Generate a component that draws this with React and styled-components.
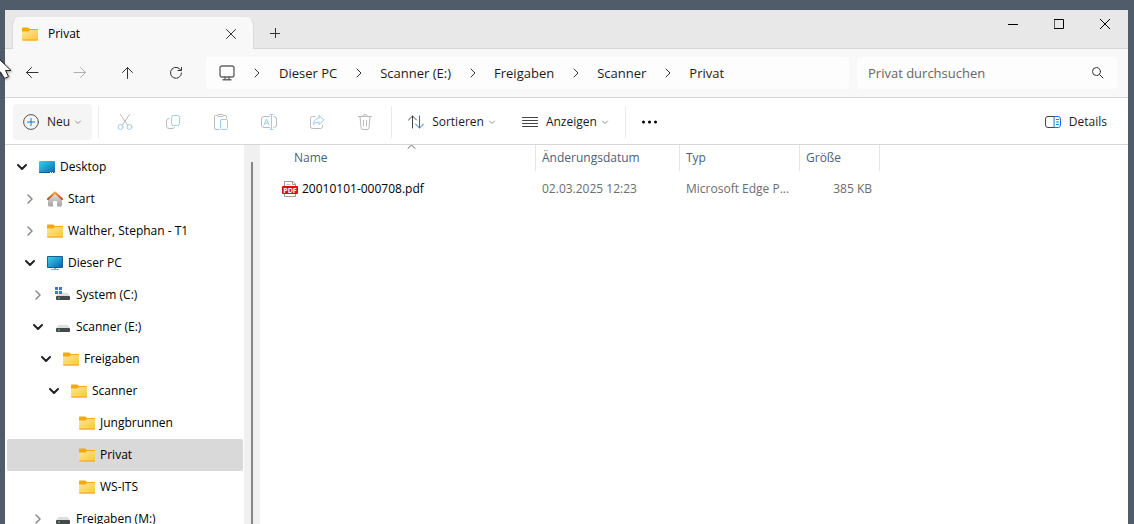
import { useState } from 'react'
import styled, { createGlobalStyle } from 'styled-components'

const GlobalStyle = createGlobalStyle`
	* {
		box-sizing: border-box;
	}

	body {
		margin: 0;
		background: #515c6b;
		color: #1b1b1b;
		font-family: 'Open Sans', 'Noto Sans', sans-serif;
		font-size: 12px;
		line-height: 16px;
	}

	button, input {
		font: inherit;
		color: inherit;
		border: none;
		background: none;
		padding: 0;
	}

	svg {
		display: block;
		flex: none;
	}
`

const Screen = styled.div`
	height: 100vh;
	padding: 10px 6px 0 5px;
	overflow: hidden;
	position: relative;
`

const Window = styled.div`
	height: 100%;
	display: flex;
	flex-direction: column;
	background: white;
`

const TitleBar = styled.header`
	height: 39px;
	flex: none;
	display: flex;
	align-items: flex-end;
	background: #e8e8e8;
	border-bottom: 1px solid #d6d6d6;
	padding-left: 7px;
`

const Tab = styled.div`
	width: 242px;
	height: 32px;
	margin-bottom: -1px;
	padding: 0 14px 0 9px;
	display: flex;
	align-items: center;
	gap: 10px;
	background: #f8f8f8;
	border: 1px solid #dcdcdc;
	border-top-color: #f8f8f8;
	border-bottom: none;
	border-radius: 8px 8px 0 0;
`

const TabTitle = styled.span`
	flex: 1;
	font-weight: 500;
	color: black;
`

const IconButton = styled.button`
	width: ${props => props.$width || 16}px;
	height: ${props => props.$height || 16}px;
	display: flex;
	flex: none;
	align-items: center;
	justify-content: center;
`

const WindowButtons = styled.div`
	display: flex;
	align-self: flex-start;
	margin-left: auto;
`

const NavBar = styled.nav`
	height: 49px;
	flex: none;
	display: flex;
	align-items: center;
	gap: 8px;
	padding: 0 11px 0 3px;
	background: #f8f8f8;
	border-bottom: 1px solid #d6d6d6;
`

const NavButtons = styled.div`
	display: flex;
	flex: none;
	width: 190px;
`

const AddressBar = styled.div`
	flex: 1;
	height: 32px;
	display: flex;
	align-items: center;
	padding-left: 13px;
	background: #fdfdfd;
	border-radius: 4px;
	font-size: 13px;
`

const PathPart = styled.span`
	display: flex;
	align-items: center;
`

const Separator = styled.span`
	width: ${props => props.$first ? 44 : 43}px;
	display: flex;
	justify-content: center;
`

const Crumb = styled.a`
	color: #1b1b1b;
	text-decoration: none;
	white-space: nowrap;
`

const SearchBox = styled.label`
	width: 260px;
	height: 32px;
	flex: none;
	display: flex;
	align-items: center;
	padding: 0 13px 0 11px;
	background: #fdfdfd;
	border-radius: 4px;
	font-size: 13px;
`

const SearchInput = styled.input`
	flex: 1;
	min-width: 0;
	outline: none;

	&::placeholder {
		color: #666666;
		opacity: 1;
	}
`

const Toolbar = styled.div`
	height: 47px;
	flex: none;
	display: flex;
	align-items: center;
	padding: 2px 11px 0 8px;
	border-bottom: 1px solid #d6d6d6;
`

const ToolButton = styled.button`
	height: 36px;
	flex: none;
	display: flex;
	align-items: center;
	gap: 8px;
	padding: 0 10px;
	border-radius: 4px;
	background: ${props => props.$filled ? '#f5f5f5' : 'none'};

	& + & {
		margin-left: 6px;
	}
`

const MenuLabel = styled.span`
	display: flex;
	align-items: center;
	gap: 4px;
`

const Divider = styled.span`
	width: 1px;
	height: 32px;
	margin: 0 ${props => props.$after || 6}px 0 ${props => props.$before || 6}px;
	background: #eaeaea;
`

const Spacer = styled.span`
	flex: 1;
`

const Body = styled.div`
	flex: 1;
	min-height: 0;
	display: flex;
`

const Tree = styled.ul`
	width: 239px;
	flex: none;
	margin: 0;
	padding: 6px 1px 0 2px;
	overflow: hidden;
	list-style: none;
`

const TreeRow = styled.li`
	height: 32px;
	display: flex;
	align-items: center;
	gap: 5px;
	padding-left: ${props => 3 + props.$depth * 8}px;
	border-radius: 2px;
	background: ${props => props.$selected ? '#d9d9d9' : 'none'};
	color: black;
	white-space: nowrap;
	cursor: default;
`

const ScrollTrack = styled.div`
	width: 16px;
	flex: none;
	display: flex;
	justify-content: center;
	padding-top: 17px;
	background: #f0f0f0;
`

const ScrollThumb = styled.div`
	width: 2px;
	background: #868686;
`

const FileArea = styled.main`
	flex: 1;
	min-width: 0;
	overflow: hidden;
`

const FileTable = styled.table`
	width: 620px;
	table-layout: fixed;
	border-collapse: separate;
	border-spacing: 0;
`

const HeadCell = styled.th`
	width: ${props => props.$width}px;
	height: 26px;
	position: relative;
	padding: 0 0 0 ${props => props.$first ? 34 : 6}px;
	border-right: 1px solid #e5e5e5;
	color: #4c607a;
	font-weight: 400;
	text-align: left;
`

const SortMark = styled.span`
	position: absolute;
	top: -1px;
	left: 147px;
`

const Cell = styled.td`
	height: 36px;
	padding: 0 8px 0 ${props => props.$first ? 22 : 6}px;
	color: #6d6d6d;
	text-align: ${props => props.$right ? 'right' : 'left'};
	white-space: nowrap;
`

const FileName = styled.span`
	display: flex;
	align-items: center;
	gap: 4px;
	color: black;
`

const Pointer = styled.div`
	position: absolute;
	top: 55px;
	left: -5px;
	filter: drop-shadow(1px 1px 1px #00000055);
`

const Stroke = ({ size = 16, color = '#333', width = 1, children }) => (
	<svg width={size} height={size} viewBox={`0 0 ${size} ${size}`} fill="none" stroke={color} strokeWidth={width} strokeLinecap="round" strokeLinejoin="round" aria-hidden="true">
		{children}
	</svg>
)

const gray = '#b9b9b9'
const paleBlue = '#9cccf0'
const blue = '#0f78d4'

const FolderIcon = () => (
	<svg width="16" height="16" viewBox="0 0 16 16" aria-hidden="true">
		<defs>
			<linearGradient id="folder" x1="0" y1="0" x2="1" y2="1">
				<stop offset="0" stopColor="#ffe69c" />
				<stop offset="1" stopColor="#ffc634" />
			</linearGradient>
		</defs>
		<path d="M0 2.500Q0 1.500 1 1.500H6L8 3H15Q16 3 16 4V8H0Z" fill="#f2a90c" />
		<path d="M0 5.500H6.500L8 4H15.500Q16 4 16 4.500V13.500Q16 14.500 15 14.500H1Q0 14.500 0 13.500Z" fill="url(#folder)" />
		<path d="M0 13.500Q0 14.500 1 14.500H15Q16 14.500 16 13.500Z" fill="#e9a51b" />
	</svg>
)

const ScreenIcon = ({ stand }) => (
	<svg width="16" height="16" viewBox="0 0 16 16" aria-hidden="true">
		<defs>
			<linearGradient id="screen" x1="0" y1="0" x2="1" y2="1">
				<stop offset="0" stopColor="#34d5e4" />
				<stop offset="1" stopColor="#0a64bb" />
			</linearGradient>
		</defs>
		{stand ? (
			<>
				<path d="M7 13H9V14H12V15H4V14H7Z" fill="#9aa5ad" />
				<rect y="1" width="16" height="12" rx="1" fill="#17618f" />
				<rect x="1" y="2" width="14" height="10" fill="url(#screen)" />
			</>
		) : (
			<>
				<rect y="2" width="16" height="12" rx="1" fill="url(#screen)" />
				<path d="M0 13H11V14H1Q0 14 0 13Z" fill="#0d5e91" />
				<path d="M11 13.500h1M13 13.500h1" stroke="white" />
			</>
		)}
	</svg>
)

const HomeIcon = () => (
	<svg width="16" height="16" viewBox="0 0 16 16" aria-hidden="true">
		<defs>
			<linearGradient id="house" x1="0" y1="0" x2="0" y2="1">
				<stop offset="0" stopColor="#e3e3e3" />
				<stop offset="1" stopColor="#a3a3a3" />
			</linearGradient>
			<linearGradient id="roof" x1="0" y1="0" x2="0" y2="1">
				<stop offset="0" stopColor="#f9a13a" />
				<stop offset="1" stopColor="#cf4515" />
			</linearGradient>
		</defs>
		<path d="M1 8L8 2L15 8V14Q15 15.500 13.500 15.500H10V10.500Q10 10 9.500 10H6.500Q6 10 6 10.500V15.500H2.500Q1 15.500 1 14Z" fill="url(#house)" />
		<path d="M1 8L8 1.500L15 8" fill="none" stroke="url(#roof)" strokeWidth="2" strokeLinecap="round" strokeLinejoin="round" />
	</svg>
)

const DriveIcon = ({ system, network }) => (
	<svg width="16" height="16" viewBox="0 0 16 16" aria-hidden="true">
		<path d="M3.500 6H12.500L15 9H1Z" fill="#dcdedf" />
		<rect x="1" y="9" width="14" height="4" rx="1" fill="#45484a" />
		<path d="M3 11h2" stroke="#5fe068" strokeWidth="1" />
		{system && <path d="M0 0H3V3H0ZM4 0H7V3H4ZM0 4H3V7H0ZM4 4H7V7H4Z" fill="#1588dc" />}
		{network && <path d="M2 13H14V15H2Z" fill="#59d869" />}
	</svg>
)

const PdfIcon = () => (
	<svg width="16" height="16" viewBox="0 0 16 16" aria-hidden="true">
		<path d="M2.500 .5H11L13.500 3V15.500H2.500Z" fill="white" stroke="#9a9a9a" />
		<path d="M10.500 .5V3.500H13.500" fill="none" stroke="#9a9a9a" />
		<path d="M4.500 3.500H8.500" stroke="#c5c5c5" />
		<rect y="5" width="16" height="8" rx="1" fill="#e30613" />
		<text x="8" y="12" fill="white" fontFamily="Open Sans, sans-serif" fontSize="7" fontWeight="700" textAnchor="middle">PDF</text>
	</svg>
)

const Chevron = ({ dir = 'down', color = '#333', width = 1 }) => (
	<Stroke size={12} color={color} width={width}>
		<path d={dir === 'down' ? 'M2 4L6 8L10 4' : 'M4 2L8 6L4 10'} />
	</Stroke>
)

const MenuChevron = () => (
	<Stroke size={8} color="#8f8f8f">
		<path d="M1.500 3L4 5.500L6.500 3" />
	</Stroke>
)

const treeIcons = {
	folder: <FolderIcon />,
	desktop: <ScreenIcon />,
	pc: <ScreenIcon stand />,
	home: <HomeIcon />,
	system: <DriveIcon system />,
	drive: <DriveIcon />,
	network: <DriveIcon network />
}

const tree = [
	{ name: 'Desktop', depth: 0, icon: 'desktop', state: 'open' },
	{ name: 'Start', depth: 1, icon: 'home', state: 'closed' },
	{ name: 'Walther, Stephan - T1', depth: 1, icon: 'folder', state: 'closed' },
	{ name: 'Dieser PC', depth: 1, icon: 'pc', state: 'open' },
	{ name: 'System (C:)', depth: 2, icon: 'system', state: 'closed' },
	{ name: 'Scanner (E:)', depth: 2, icon: 'drive', state: 'open' },
	{ name: 'Freigaben', depth: 3, icon: 'folder', state: 'open' },
	{ name: 'Scanner', depth: 4, icon: 'folder', state: 'open' },
	{ name: 'Jungbrunnen', depth: 5, icon: 'folder' },
	{ name: 'Privat', depth: 5, icon: 'folder' },
	{ name: 'WS-ITS', depth: 5, icon: 'folder' },
	{ name: 'Freigaben (M:)', depth: 2, icon: 'network', state: 'closed' }
]

const path = ['Dieser PC', 'Scanner (E:)', 'Freigaben', 'Scanner', 'Privat']

const navButtons = [
	{ label: 'Zurück', d: 'M14 7.500H2.500M7.500 2.500L2.500 7.500L7.500 12.500' },
	{ label: 'Vorwärts', d: 'M2 7.500H13.500M8.500 2.500L13.500 7.500L8.500 12.500', color: '#b0b0b0' },
	{ label: 'Nach oben', d: 'M7.500 13.500V2.500M2.500 7.500L7.500 2.500L12.500 7.500' },
	{ label: 'Aktualisieren', d: 'M13 5.500A5.500 5.500 0 1 0 13.500 8M13.500 2.500V5.500H10' }
]

const tools = [
	{
		label: 'Ausschneiden',
		icon: (
			<>
				<path d="M3.500 .5L10.500 11M12.500 .5L5.500 11" />
				<g stroke={paleBlue}><circle cx="3.500" cy="13" r="2.500" /><circle cx="12.500" cy="13" r="2.500" /></g>
			</>
		)
	},
	{
		label: 'Kopieren',
		icon: (
			<>
				<path d="M4 4.500Q1.500 4.500 1.500 7V12Q1.500 14.500 4 14.500H7Q9.500 14.500 9.500 13.500" />
				<rect x="6.500" y="1.500" width="8" height="10" rx="2" stroke={paleBlue} />
			</>
		)
	},
	{
		label: 'Einfügen',
		icon: (
			<>
				<path d="M4.500 1.500H2.500Q1.500 1.500 1.500 2.500V14Q1.500 15.500 3 15.500H6M10.500 1.500H12.500Q13.500 1.500 13.500 2.500V4" />
				<rect x="4.500" y=".5" width="6" height="2" rx="1" />
				<rect x="7.500" y="5.500" width="7" height="10" rx="1" stroke={paleBlue} />
			</>
		)
	},
	{
		label: 'Umbenennen',
		icon: (
			<>
				<path d="M8.500 2.500H3Q.5 2.500 .5 5V11Q.5 13.500 3 13.500H8.500M13 2.500Q15.500 2.500 15.500 5V11Q15.500 13.500 13 13.500" />
				<path d="M3 11L5.500 5L8 11M4 9H7M9 .5H12M9 15.500H12M10.500 .5V15.500" stroke={paleBlue} />
			</>
		)
	},
	{
		label: 'Freigeben',
		icon: (
			<>
				<path d="M6 2.500H3.500Q1.500 2.500 1.500 4.500V12.500Q1.500 14.500 3.500 14.500H11.500Q13.500 14.500 13.500 12.500V11.500" />
				<path d="M10 1.500L15 6L10 10.500V8Q6.500 8 4.500 10.500Q5 4.500 10 4Z" stroke={paleBlue} />
			</>
		)
	},
	{
		label: 'Löschen',
		icon: <path d="M1.500 2.500H14.500M5.500 2.500Q5.500 .5 8 .5T10.500 2.500M3 2.500L4 13.500Q4 15.500 6 15.500H10Q12 15.500 12 13.500L13 2.500M6.500 6.500V12M9.500 6.500V12" />
	}
]

const App = () => {
	const [selected, setSelected] = useState('Privat')
	const [query, setQuery] = useState('')

	return (
		<Screen>
			<GlobalStyle />
			<Window>
				<TitleBar>
					<Tab>
						<FolderIcon />
						<TabTitle>Privat</TabTitle>
						<IconButton aria-label="Tab schließen">
							<Stroke size={10}><path d="M.5 .5L9.500 9.500M9.500 .5L.5 9.500" /></Stroke>
						</IconButton>
					</Tab>
					<IconButton $width={42} $height={30} aria-label="Neuer Tab">
						<Stroke size={10}><path d="M0 5.500H10M5.500 0V10" /></Stroke>
					</IconButton>
					<WindowButtons>
						<IconButton $width={46} $height={28} aria-label="Minimieren">
							<Stroke size={10} color="black"><path d="M0 5.500H10" /></Stroke>
						</IconButton>
						<IconButton $width={46} $height={28} aria-label="Maximieren">
							<Stroke size={10} color="black"><rect x=".5" y=".5" width="9" height="9" /></Stroke>
						</IconButton>
						<IconButton $width={46} $height={28} aria-label="Schließen">
							<Stroke size={10} color="black"><path d="M0 0L10 10M10 0L0 10" /></Stroke>
						</IconButton>
					</WindowButtons>
				</TitleBar>

				<NavBar>
					<NavButtons>
						{navButtons.map(item => (
							<IconButton key={item.label} $width={48} $height={32} aria-label={item.label}>
								<Stroke color={item.color}><path d={item.d} /></Stroke>
							</IconButton>
						))}
					</NavButtons>
					<AddressBar>
						<Stroke color="#666" width={1.4}>
							<rect x="1" y="1" width="14" height="11" rx="2" />
							<path d="M6 12V14.500M10 12V14.500M4 14.800H12" />
						</Stroke>
						{path.map((name, i) => (
							<PathPart key={name}>
								<Separator $first={i === 0}><Chevron dir="right" /></Separator>
								<Crumb href="#">{name}</Crumb>
							</PathPart>
						))}
					</AddressBar>
					<SearchBox>
						<SearchInput type="text" aria-label="Privat durchsuchen" placeholder="Privat durchsuchen" value={query} onChange={e => setQuery(e.target.value)} />
						<Stroke size={12}><circle cx="4.500" cy="4.500" r="4" /><path d="M7.500 7.500L11 11" /></Stroke>
					</SearchBox>
				</NavBar>

				<Toolbar>
					<ToolButton $filled>
						<Stroke color="#555">
							<circle cx="8" cy="8" r="7.400" />
							<path d="M8 4.500V11.500M4.500 8H11.500" stroke={blue} />
						</Stroke>
						<MenuLabel>Neu<MenuChevron /></MenuLabel>
					</ToolButton>
					<Divider $after={2} />
					{tools.map(tool => (
						<IconButton key={tool.label} $width={48} $height={36} aria-label={tool.label} disabled>
							<Stroke color={gray}>{tool.icon}</Stroke>
						</IconButton>
					))}
					<Divider $before={2} />
					<ToolButton>
						<Stroke color="#444">
							<path d="M4.500 14V2M.5 6L4.500 2L8.500 6" />
							<path d="M11.500 2V14M7.500 10L11.500 14L15.500 10" stroke={blue} />
						</Stroke>
						<MenuLabel>Sortieren<MenuChevron /></MenuLabel>
					</ToolButton>
					<ToolButton>
						<Stroke color="#444"><path d="M.5 3.500H15.500M.5 6.500H15.500M.5 9.500H15.500M.5 12.500H15.500" /></Stroke>
						<MenuLabel>Anzeigen<MenuChevron /></MenuLabel>
					</ToolButton>
					<Divider />
					<ToolButton aria-label="Mehr anzeigen">
						<svg width="16" height="16" viewBox="0 0 16 16" aria-hidden="true">
							<circle cx="1.500" cy="8" r="1.500" />
							<circle cx="7.500" cy="8" r="1.500" />
							<circle cx="13.500" cy="8" r="1.500" />
						</svg>
					</ToolButton>
					<Spacer />
					<ToolButton>
						<Stroke color="#444">
							<path d="M9.500 2.500H3Q.5 2.500 .5 5V11Q.5 13.500 3 13.500H9.500" />
							<path d="M9.500 2.500H13Q15.500 2.500 15.500 5V11Q15.500 13.500 13 13.500H9.500ZM11.500 5.500H13.500M11.500 8H13.500M11.500 10.500H13.500" stroke={blue} />
						</Stroke>
						Details
					</ToolButton>
				</Toolbar>

				<Body>
					<Tree>
						{tree.map(item => (
							<TreeRow key={item.name} $depth={item.depth} $selected={item.name === selected} onClick={() => setSelected(item.name)}>
								<IconButton $width={24} as={item.state ? 'button' : 'span'} aria-label={item.state && item.name + ' auf- oder zuklappen'}>
									{item.state && <Chevron dir={item.state === 'open' ? 'down' : 'right'} color={item.state === 'open' ? '#222' : '#8a8a8a'} width={item.state === 'open' ? 2 : 1.5} />}
								</IconButton>
								{treeIcons[item.icon]}
								<span>{item.name}</span>
							</TreeRow>
						))}
					</Tree>
					<ScrollTrack><ScrollThumb /></ScrollTrack>
					<FileArea>
						<FileTable>
							<thead>
								<tr>
									<HeadCell $width={276} $first>
										Name
										<SortMark><Stroke size={9} color="#666"><path d="M1 4.500L4.500 1L8 4.500" /></Stroke></SortMark>
									</HeadCell>
									<HeadCell $width={144}>Änderungsdatum</HeadCell>
									<HeadCell $width={120}>Typ</HeadCell>
									<HeadCell $width={80}>Größe</HeadCell>
								</tr>
							</thead>
							<tbody>
								<tr>
									<Cell $first><FileName><PdfIcon />20010101-000708.pdf</FileName></Cell>
									<Cell>02.03.2025 12:23</Cell>
									<Cell>Microsoft Edge P...</Cell>
									<Cell $right>385 KB</Cell>
								</tr>
							</tbody>
						</FileTable>
					</FileArea>
				</Body>
			</Window>
			<Pointer>
				<svg width="18" height="26" viewBox="0 0 18 26" aria-hidden="true">
					<path d="M.5 .5V20.500L5.500 17L9.500 23.500L13.500 21.500L10.500 15.500H16Z" fill="white" stroke="#222" />
				</svg>
			</Pointer>
		</Screen>
	)
}

export default App
